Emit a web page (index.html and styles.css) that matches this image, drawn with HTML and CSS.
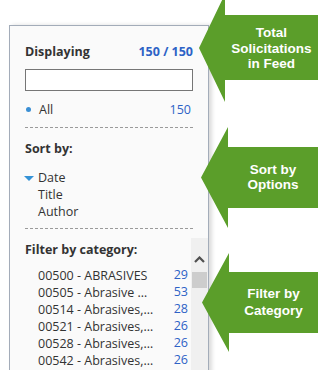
FILE: index.html
```html
<!DOCTYPE html>
<html>
<head>
<meta charset="utf-8">
<link rel="stylesheet" href="styles.css">
</head>
<body>
<div class="panel">
  <div class="upper">
    <div class="row head">
      <span class="title">Displaying</span>
      <span class="total">150 / 150</span>
    </div>
    <div class="search"></div>
    <div class="row all">
      <span class="dot"></span>
      <span class="label">All</span>
      <span class="count">150</span>
    </div>
    <div class="section">
      <div class="row title">Sort by:</div>
      <ul class="sort">
        <li class="active"><span class="tri"></span>Date</li>
        <li>Title</li>
        <li>Author</li>
      </ul>
    </div>
  </div>
  <div class="filter">
    <div class="filter-body">
      <div class="row title">Filter by category:</div>
      <ul class="cats">
        <li><span>00500 - ABRASIVES</span><span class="count">29</span></li>
        <li><span>00505 - Abrasive …</span><span class="count">53</span></li>
        <li><span>00514 - Abrasives,…</span><span class="count">28</span></li>
        <li><span>00521 - Abrasives,…</span><span class="count">26</span></li>
        <li><span>00528 - Abrasives,…</span><span class="count">26</span></li>
        <li><span>00542 - Abrasives,…</span><span class="count">26</span></li>
      </ul>
    </div>
    <div class="scrollbar">
      <svg class="chev" width="11" height="7" viewBox="0 0 11 7"><path d="M1 6 L5.5 1.5 L10 6" fill="none" stroke="#505050" stroke-width="2.2"/></svg>
      <div class="thumb"></div>
    </div>
  </div>
</div>

<div class="callout c1">
  <svg class="shape" width="120" height="112" viewBox="0 0 120 112"><polygon points="0,54 26,0 26,21 119,21 119,86 26,86 26,108" /></svg>
  <div class="text">Total<br>Solicitations<br>in Feed</div>
</div>
<div class="callout c2">
  <svg class="shape" width="118" height="104" viewBox="0 0 118 104"><polygon points="0,50.5 27,0 27,20 117,20 117,81 27,81 27,101" /></svg>
  <div class="text">Sort by<br>Options</div>
</div>
<div class="callout c3">
  <svg class="shape" width="118" height="102" viewBox="0 0 118 102"><polygon points="0,49.5 27,0 27,19 116,19 116,80 27,80 27,99" /></svg>
  <div class="text">Filter by<br>Category</div>
</div>
</body>
</html>
```
FILE: styles.css
```css
html, body {
  margin: 0;
  padding: 0;
  background: #ffffff;
  overflow: hidden;
  width: 318px;
  height: 370px;
}
body {
  position: relative;
  font-family: "Open Sans", "Noto Sans", sans-serif;
  font-size: 12.5px;
  color: #333333;
}
ul {
  list-style: none;
  margin: 0;
  padding: 0;
}
.panel {
  margin: 25px 0 0 9px;
  width: 198px;
  height: 360px;
  border: 1px solid #a3acb9;
  border-bottom: none;
  background: #fafafa;
  box-shadow: 3px 0 4px rgba(0, 0, 0, 0.14);
}
.upper {
  padding: 17px 15px 0 15px;
}
.row {
  display: flex;
  align-items: center;
  height: 17px;
  line-height: 17px;
}
.title {
  font-weight: bold;
  color: #333333;
}
.head {
  justify-content: space-between;
}
.total {
  font-weight: bold;
  color: #2d62c6;
}
.search {
  margin-top: 9px;
  height: 20px;
  border: 1px solid #767676;
  background: #ffffff;
}
.all {
  margin-top: 10px;
  padding-bottom: 9px;
  border-bottom: 1px dashed #9a9a9a;
}
.dot {
  width: 5px;
  height: 5px;
  border-radius: 50%;
  background: #3a8fd4;
  margin: 0 8px 0 1px;
}
.all .label {
  flex: 1;
}
.all .count {
  margin-right: 2px;
}
.count {
  color: #2d62c6;
}
.section {
  padding-top: 12px;
  padding-bottom: 8px;
  border-bottom: 1px dashed #9a9a9a;
}
.sort {
  margin-top: 12px;
}
.sort li {
  position: relative;
  height: 17px;
  line-height: 17px;
  padding-left: 13px;
}
.tri {
  position: absolute;
  left: -1px;
  top: 7px;
  width: 0;
  height: 0;
  border-left: 5px solid transparent;
  border-right: 5px solid transparent;
  border-top: 5px solid #3592d6;
}
.filter {
  margin-top: 9px;
  display: flex;
  height: 140px;
}
.filter-body {
  flex: 1;
  padding: 3px 3px 0 15px;
}
.cats {
  margin-top: 9px;
}
.cats li {
  display: flex;
  justify-content: space-between;
  height: 17px;
  line-height: 17px;
  padding-left: 13px;
}
.cats .count {
  position: relative;
  top: -1px;
}
.scrollbar {
  width: 17px;
  background: #f0f0f0;
  display: flex;
  flex-direction: column;
  align-items: center;
}
.chev {
  margin-top: 18px;
  display: block;
}
.thumb {
  margin-top: 9px;
  width: 15px;
  height: 16px;
  background: #cdcdcd;
}
.callout {
  position: absolute;
}
.shape {
  display: block;
}
.shape polygon {
  fill: #5b9e2a;
}
.callout .text {
  position: absolute;
  display: flex;
  align-items: center;
  justify-content: center;
  text-align: center;
  font-family: "Liberation Sans", Arial, sans-serif;
  font-weight: bold;
  font-size: 13.5px;
  color: #ffffff;
}
.c1 {
  left: 199px;
  top: -6px;
}
.c1 .text {
  left: 26px;
  top: 22px;
  width: 93px;
  height: 65px;
  line-height: 15.5px;
}
.c2 {
  left: 201px;
  top: 126.5px;
}
.c2 .text {
  left: 27px;
  top: 20px;
  width: 90px;
  height: 61px;
  line-height: 15px;
}
.c3 {
  left: 202px;
  top: 252.5px;
}
.c3 .text {
  left: 27px;
  top: 19px;
  width: 89px;
  height: 61px;
  line-height: 17px;
}
```
